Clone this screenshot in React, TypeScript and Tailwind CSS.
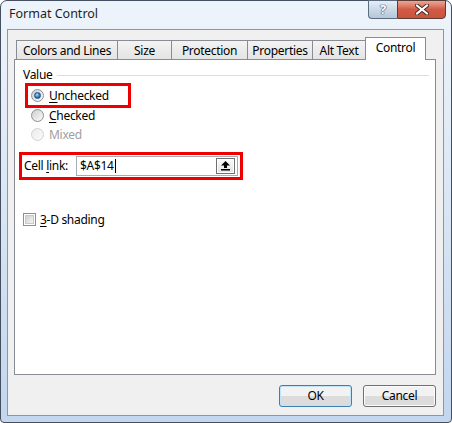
import React from "react";

function Radio({ checked = false, disabled = false }: { checked?: boolean; disabled?: boolean }) {
  return (
    <span
      className={
        disabled
          ? "flex h-[13px] w-[13px] shrink-0 items-center justify-center rounded-full border border-[#d2d2d2] bg-linear-to-br from-[#ececec] to-[#fafafa]"
          : "flex h-[13px] w-[13px] shrink-0 items-center justify-center rounded-full border border-[#8e8f8f] bg-linear-to-br from-[#cfcfcf] to-[#fbfbfb]"
      }
    >
      {checked && (
        <span className="h-[7px] w-[7px] rounded-full border border-[#1b4c7e] bg-[radial-gradient(circle_at_40%_35%,#a8dcff_0%,#2b7bc4_55%,#174f8a_100%)]" />
      )}
    </span>
  );
}

function Checkbox() {
  return (
    <span className="flex h-[13px] w-[13px] shrink-0 items-center justify-center border border-[#8e8f8f] bg-white">
      <span className="h-[9px] w-[9px] border border-[#c5c8cc] bg-linear-to-br from-[#cdd0d4] to-[#f4f4f4]" />
    </span>
  );
}

function UpArrow() {
  return (
    <svg width="9" height="10" viewBox="0 0 9 10">
      <polygon points="4.5,0 0,4.5 3,4.5 3,7 6,7 6,4.5 9,4.5" fill="#000" />
      <rect x="0" y="8" width="9" height="1.5" fill="#000" />
    </svg>
  );
}

function Tab({ label, w, selected = false, first = false }: { label: string; w: string; selected?: boolean; first?: boolean }) {
  if (selected) {
    return (
      <div
        className={`relative z-10 -mb-px -ml-px flex h-[23px] items-start justify-center border border-b-0 border-[#898c95] bg-white pt-[4px] ${w}`}
      >
        {label}
      </div>
    );
  }
  return (
    <div
      className={`flex h-[19px] items-center justify-center border border-b-0 border-[#898c95] bg-linear-to-b from-[#f3f3f3] to-[#e4e4e4] pt-px ${first ? "" : "-ml-px"} ${w}`}
    >
      {label}
    </div>
  );
}

export default function App() {
  return (
    <div className="flex h-[423px] w-[452px] flex-col rounded-t-[7px] rounded-b-[4px] border border-[#44505f] bg-linear-to-b from-[#edf3fa] from-[4%] to-[#c2d6ed] font-['Noto_Sans',sans-serif] text-[12px] leading-none tracking-[-0.3px] text-black">
      {/* Title bar */}
      <div className="flex h-[28px] shrink-0 items-start justify-between">
        <div className="flex h-[28px] items-center pl-[8px] pb-px text-[12.5px] tracking-normal text-[#1e1e1e]">Format Control</div>
        <div className="-mt-px mr-[5px] flex">
          <div className="flex h-[19px] w-[29px] items-center justify-center rounded-bl-[4px] border border-r-0 border-[#5b6a7d] bg-linear-to-b from-[#e6eef7] via-[#cbd8e6] to-[#b6c7da] text-[13px] font-bold text-white [text-shadow:0_0_1px_#3d4a5a,0_0_1px_#3d4a5a,0_0_1px_#3d4a5a]">
            ?
          </div>
          <div className="flex h-[19px] w-[49px] items-center justify-center rounded-br-[4px] border border-[#5a3b36] bg-linear-to-b from-[#e9a797] via-[#d15a44] to-[#c8543e]">
            <svg width="14" height="11" viewBox="0 0 14 11">
              <path d="M2 1.5 L12 9.5 M12 1.5 L2 9.5" stroke="#4a2a26" strokeWidth="4" strokeLinecap="square" />
              <path d="M2 1.5 L12 9.5 M12 1.5 L2 9.5" stroke="#ffffff" strokeWidth="2" strokeLinecap="square" />
            </svg>
          </div>
        </div>
      </div>

      {/* Client area */}
      <div className="mb-[6px] ml-[6px] mr-[7px] flex flex-1 flex-col border border-[#8798ad] bg-[#f0f0f0] pl-[6px] pr-[7px] pt-[7px]">
        {/* Tabs */}
        <div className="flex h-[22px] shrink-0 items-end pl-[2px]">
          <Tab label="Colors and Lines" w="w-[102px]" first />
          <Tab label="Size" w="w-[55px]" />
          <Tab label="Protection" w="w-[77px]" />
          <Tab label="Properties" w="w-[66px]" />
          <Tab label="Alt Text" w="w-[54px]" />
          <Tab label="Control" w="w-[61px]" selected />
        </div>

        {/* Panel */}
        <div className="flex h-[316px] shrink-0 flex-col border border-[#898c95] bg-white">
          {/* Value group header */}
          <div className="mt-[7px] flex h-[16px] items-center pl-[8px] pr-[6px]">
            <span>Value</span>
            <span className="ml-[5px] h-px flex-1 bg-[#d5dfe5]" />
          </div>

          {/* Unchecked (boxed) */}
          <div className="ml-[10px] flex h-[25px] w-[106px] items-center border-[3px] border-[#ee0000] pl-[3px]">
            <Radio checked />
            <span className="ml-[5px]">
              <span className="underline underline-offset-[2px]">U</span>nchecked
            </span>
          </div>

          {/* Checked */}
          <div className="ml-[16px] mt-px flex h-[13px] items-center">
            <Radio />
            <span className="ml-[5px]">
              <span className="underline underline-offset-[2px]">C</span>hecked
            </span>
          </div>

          {/* Mixed */}
          <div className="ml-[16px] mt-[6px] flex h-[13px] items-center">
            <Radio disabled />
            <span className="ml-[5px] text-[#a0a0a0]">Mixed</span>
          </div>

          {/* Cell link (boxed) */}
          <div className="ml-[4px] mt-[11px] flex h-[28px] w-[224px] items-center border-[3px] border-[#ee0000] pl-[2px]">
            <span className="w-[52px] shrink-0">
              Cell <span className="underline underline-offset-[2px]">l</span>ink:
            </span>
            <div className="flex h-[20px] w-[162px] shrink-0 items-center border border-[#a5acb5] bg-white pl-[3px] pr-[2px]">
              <span>$A$14</span>
              <span className="ml-px h-[14px] w-px bg-black" />
              <span className="flex-1" />
              <div className="flex h-[16px] w-[19px] items-center justify-center border border-[#707070] bg-linear-to-b from-[#fbfbfb] to-[#e2e2e2] shadow-[inset_0_0_0_1px_#ffffff]">
                <UpArrow />
              </div>
            </div>
          </div>

          {/* 3-D shading */}
          <div className="ml-[8px] mt-[33px] flex h-[13px] items-center">
            <Checkbox />
            <span className="ml-[4px]">
              <span className="underline underline-offset-[2px]">3</span>-D shading
            </span>
          </div>
        </div>

        {/* Buttons */}
        <div className="mt-[10px] flex h-[22px] shrink-0 justify-end gap-[11px]">
          <div className="flex w-[73px] items-center justify-center rounded-[3px] border border-[#3c7fb1] bg-linear-to-b from-[#f2f2f2] from-50% to-[#dcdcdc] to-50% shadow-[inset_0_0_0_1px_#bfe4f8]">
            OK
          </div>
          <div className="flex w-[73px] items-center justify-center rounded-[3px] border border-[#707070] bg-linear-to-b from-[#f2f2f2] from-50% to-[#dcdcdc] to-50% shadow-[inset_0_0_0_1px_#fcfcfc]">
            Cancel
          </div>
        </div>
      </div>
    </div>
  );
}
